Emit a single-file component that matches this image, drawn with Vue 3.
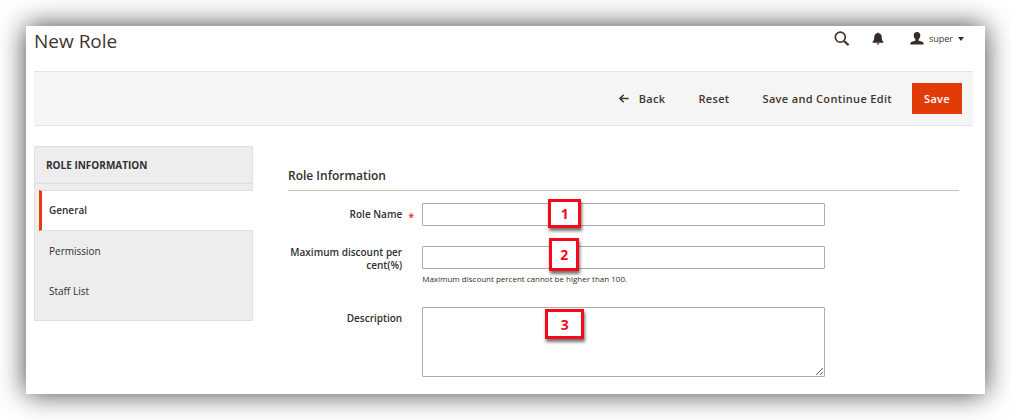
<script setup>
import { ref } from 'vue'

const sections = ['General', 'Permission', 'Staff List']
const active = ref('General')
const roleName = ref('')
const maxDiscount = ref('')
const description = ref('')
</script>

<template>
  <div class="page">
    <div class="window">
      <header class="header">
        <h1>New Role</h1>
        <div class="tools">
          <button type="button" class="icon-button" aria-label="Search">
            <svg width="16" height="16" viewBox="0 0 16 16" fill="none" stroke="#41362f">
              <circle cx="6.3" cy="6.2" r="5" stroke-width="1.7" />
              <path d="M10 10l4.6 4.1" stroke-width="2.2" />
            </svg>
          </button>
          <button type="button" class="icon-button" aria-label="Notifications">
            <svg width="12" height="13" viewBox="0 0 12 13" fill="#362d29">
              <path d="M5.2 1.3a.8.8 0 0 1 1.6 0C9 1.8 9.8 3.3 9.8 5.6c0 2.300.6 3.400 1.600 4.200v1H.6v-1c1-.8 1.600-1.900 1.600-4.200C2.200 3.300 3 1.800 5.200 1.300zM4.700 11.200h2.600c0 .8-.5 1.300-1.300 1.300s-1.300-.5-1.300-1.300z" />
            </svg>
          </button>
          <button type="button" class="account">
            <svg width="14" height="13" viewBox="0 0 14 13" fill="#362d29">
              <path d="M7 0c2.200 0 3.300 1.300 3.300 3.300 0 1.700-.7 3.100-1.700 3.900v1.300c.8.6 5 1 5 3v.9H.4v-.9c0-2 4.200-2.400 5-3V7.200C4.400 6.400 3.700 5 3.700 3.300 3.700 1.300 4.800 0 7 0z" />
            </svg>
            <span>super</span>
            <svg width="6" height="4" viewBox="0 0 6 4" fill="#362d29"><path d="M0 0h6L3 4z" /></svg>
          </button>
        </div>
      </header>

      <div class="actions">
        <button type="button" class="action">
          <svg width="10" height="9" viewBox="0 0 10 9" fill="none" stroke="#41362f" stroke-width="1.5">
            <path d="M9.600 4.500H1M4.700.7L.9 4.500l3.800 3.800" />
          </svg>
          Back
        </button>
        <button type="button" class="action">Reset</button>
        <button type="button" class="action">Save and Continue Edit</button>
        <button type="submit" form="role-form" class="action primary">Save</button>
      </div>

      <div class="content">
        <nav class="sidebar">
          <h2>ROLE INFORMATION</h2>
          <ul>
            <li v-for="section in sections" :key="section">
              <a href="#" :class="{ active: section === active }" @click.prevent="active = section">{{ section }}</a>
            </li>
          </ul>
        </nav>

        <form id="role-form" class="form" @submit.prevent>
          <h2>Role Information</h2>
          <div class="field">
            <label for="role-name" class="required">Role Name</label>
            <div class="control">
              <input id="role-name" v-model="roleName" type="text">
              <span class="badge first">1</span>
            </div>
          </div>
          <div class="field">
            <label for="max-discount" class="two-line">Maximum discount per cent(%)</label>
            <div class="control">
              <input id="max-discount" v-model="maxDiscount" type="text" aria-describedby="discount-note">
              <p id="discount-note">Maximum discount percent cannot be higher than 100.</p>
              <span class="badge second">2</span>
            </div>
          </div>
          <div class="field">
            <label for="description">Description</label>
            <div class="control">
              <textarea id="description" v-model="description"></textarea>
              <span class="badge third">3</span>
            </div>
          </div>
        </form>
      </div>
    </div>
  </div>
</template>

<style>
body {
  background: #fff;
}
</style>

<style scoped>
* {
  box-sizing: border-box;
}

.page {
  padding: 26px;
  overflow: hidden;
  font-family: "Open Sans", "Noto Sans", sans-serif;
  font-size: 10px;
  color: #303030;
}

.window {
  padding: 0 12px 17px 8px;
  background: #fff;
  box-shadow: 0 0 26px rgba(0, 0, 0, 0.75);
}

h1,
h2,
p,
ul {
  margin: 0;
  padding: 0;
}

button {
  border: 0;
  padding: 0;
  background: none;
  font: inherit;
  color: inherit;
  cursor: pointer;
}

svg {
  display: block;
}

.header {
  display: flex;
  justify-content: space-between;
  align-items: flex-start;
  height: 45px;
  padding-right: 9px;
}

.header h1 {
  font-size: 19px;
  line-height: 30px;
  font-weight: 400;
  color: #41362f;
}

.tools {
  display: flex;
  align-items: center;
  height: 25px;
}

.icon-button {
  margin-right: 22px;
}

.icon-button + .icon-button {
  margin-right: 26px;
}

.account {
  display: flex;
  align-items: center;
  gap: 5px;
  font-size: 9px;
  line-height: 16px;
  color: #41362f;
}

.actions {
  display: flex;
  justify-content: flex-end;
  align-items: center;
  height: 55px;
  padding-right: 11px;
  border-top: 1px solid #e3e3e3;
  border-bottom: 1px solid #e3e3e3;
  background: #f5f5f5;
}

.action {
  display: flex;
  align-items: center;
  gap: 10px;
  height: 31px;
  margin-right: 33px;
  font-size: 11px;
  font-weight: 600;
  letter-spacing: 0.03em;
  color: #41362f;
}

.action:nth-child(3) {
  margin-right: 20px;
}

.action.primary {
  margin-right: 0;
  padding: 0 12px;
  background: #e33b07;
  color: #fff;
}

.content {
  display: flex;
  align-items: flex-start;
  gap: 35px;
  padding: 20px 14px 0 0;
}

.sidebar {
  flex: 0 0 219px;
  height: 175px;
  border: 1px solid #e0e0e0;
  background: #ededed;
}

.sidebar h2 {
  margin-bottom: 6px;
  padding: 0 11px;
  border-bottom: 1px solid #dfdfdf;
  font-size: 10px;
  line-height: 36px;
  font-weight: 700;
}

.sidebar ul {
  list-style: none;
}

.sidebar a {
  display: block;
  margin-left: 4px;
  padding-left: 10px;
  line-height: 40px;
  color: #303030;
  text-decoration: none;
}

.sidebar a.active {
  margin-right: -1px;
  padding-left: 7px;
  border: solid #e0e0e0;
  border-width: 1px 0;
  border-left: 3px solid #eb3b0b;
  background: #fff;
  font-weight: 600;
  line-height: 39px;
}

.form {
  flex: 1;
  min-width: 0;
}

.form h2 {
  margin-bottom: 12px;
  padding: 20px 0 4px;
  border-bottom: 1px solid #cac3b4;
  font-size: 12px;
  line-height: 20px;
  font-weight: 600;
}

.field {
  display: grid;
  grid-template-columns: 20% 60%;
  margin-bottom: 20px;
}

.field:last-child {
  margin-bottom: 0;
}

label {
  position: relative;
  padding: 5px 20px 0 0;
  font-weight: 600;
  line-height: 13px;
  text-align: right;
}

label.two-line {
  padding-top: 0;
}

.required::after {
  content: "*";
  position: absolute;
  top: 7px;
  right: 8px;
  color: #e22626;
  font-size: 11px;
}

.control {
  position: relative;
}

input,
textarea {
  display: block;
  width: 100%;
  height: 23px;
  margin: 0;
  padding: 2px 8px;
  border: 1px solid #adadad;
  border-radius: 1px;
  background: #fff;
  font: inherit;
}

textarea {
  height: 70px;
  resize: vertical;
}

.control p {
  padding-top: 2px;
  font-size: 8px;
  line-height: 16px;
}

.badge {
  position: absolute;
  display: flex;
  align-items: center;
  justify-content: center;
  border: 3px solid #f50a1c;
  background: #fff;
  box-shadow: 1px 3px 3px rgba(0, 0, 0, 0.55);
  font-size: 14px;
  font-weight: 700;
  color: #f50a1c;
}

.first {
  top: -4px;
  left: 126px;
  width: 33px;
  height: 29px;
}

.second {
  top: -8px;
  left: 127px;
  width: 30px;
  height: 33px;
}

.third {
  top: 2px;
  left: 123px;
  width: 39px;
  height: 30px;
}
</style>
